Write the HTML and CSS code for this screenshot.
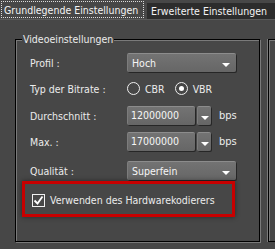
FILE: index.html
```html
<!DOCTYPE html>
<html lang="de">
<head>
    <meta charset="UTF-8">
    <title>Videoeinstellungen</title>
    <link rel="stylesheet" href="styles.css">
</head>
<body>
    <div class="tabs">
        <div class="tab active"><span>Grundlegende Einstellungen</span></div>
        <div class="tab">Erweiterte Einstellungen</div>
    </div>

    <div class="page">
        <div class="group">
            <span class="legend">Videoeinstellungen</span>

            <div class="row">
                <label>Profil :</label>
                <div class="combo"><span>Hoch</span><i class="arrow"></i></div>
            </div>

            <div class="row">
                <label>Typ der Bitrate :</label>
                <div class="radio"><i class="dot"></i>CBR</div>
                <div class="radio checked"><i class="dot"></i>VBR</div>
            </div>

            <div class="row row-avg">
                <label>Durchschnitt :</label>
                <div class="field">12000000</div>
                <div class="spin"><i class="arrow"></i></div>
                <span class="unit">bps</span>
            </div>

            <div class="row">
                <label>Max. :</label>
                <div class="field">17000000</div>
                <div class="spin"><i class="arrow"></i></div>
                <span class="unit">bps</span>
            </div>

            <div class="row row-quality">
                <label>Qualität :</label>
                <div class="combo"><span>Superfein</span><i class="arrow"></i></div>
            </div>

            <div class="hw">
                <i class="check"><svg width="11" height="11" viewBox="0 0 11 11"><path d="M1.5 5.5 L4.5 8.5 L9.5 1.5" fill="none" stroke="#fff" stroke-width="1.8"/></svg></i>
                <span>Verwenden des Hardwarekodierers</span>
            </div>
        </div>
        <div class="group group-next"></div>
    </div>
</body>
</html>
```

FILE: styles.css
```css
:root {
    --bg: #474747;
    --tabDark: #2c2c2c;
    --text: #ececec;
    --etch: #7a7a7a;
    --red: #c80000;
}

body {
    margin: 0;
    background: var(--bg);
    color: var(--text);
    font-family: 'DejaVu Sans Condensed', 'DejaVu Sans', sans-serif;
    font-size: 10.5px;
    width: 275px;
    height: 249px;
    overflow: hidden;
}

.tabs {
    display: flex;
    height: 20px;
    align-items: flex-end;
    border-bottom: 1px solid #5a5a5a;
    box-sizing: border-box;
}

.tab {
    height: 16px;
    line-height: 16px;
    padding: 0 4px;
    background: var(--tabDark);
    color: #f4f4f4;
    white-space: nowrap;
    margin-left: 3px;
    flex: 1;
    min-width: 0;
}

.tab.active {
    flex: none;
    width: 144px;
    height: 19px;
    margin-left: 0;
    padding: 1px 0 0 1px;
    background: var(--bg);
    box-sizing: border-box;
}

.tab.active span {
    display: block;
    height: 17px;
    line-height: 16px;
    padding-left: 2px;
    border: 1px dotted #dcdcdc;
    box-sizing: border-box;
}

.page {
    display: flex;
    padding-top: 19px;
}

.group {
    flex: none;
    margin-left: 15px;
    width: 245px;
    height: 203px;
    box-sizing: border-box;
    border: 1px solid #000;
    box-shadow: inset 1px 1px 0 var(--etch), 1px 1px 0 var(--etch);
    padding: 7px 0 0 14px;
    display: flex;
    flex-direction: column;
    gap: 7px;
}

.group-next {
    margin-left: 8px;
    width: 7px;
    padding: 0;
    border-right: none;
    box-shadow: -1px 0 0 var(--etch), inset 1px 1px 0 var(--etch);
}

.legend {
    align-self: flex-start;
    margin: -15px 0 0 -8px;
    padding: 0 1px;
    height: 14px;
    line-height: 14px;
    background: var(--bg);
}

.row {
    display: flex;
    align-items: center;
    height: 19px;
    white-space: nowrap;
}

.row > * {
    flex: none;
}

.row-avg {
    margin-top: 1px;
}

.row-quality {
    margin-top: 3px;
}

.row label {
    width: 97px;
}

.combo,
.field,
.spin {
    height: 19px;
    box-sizing: border-box;
    background: linear-gradient(#737373, #666);
    border-top: 1px solid #8c8c8c;
    border-left: 1px solid #7c7c7c;
    box-shadow: 1px 1px 0 #262626;
    border-radius: 2px;
    color: #f6f6f6;
}

.combo {
    width: 109px;
    display: flex;
    align-items: center;
    justify-content: space-between;
    padding: 0 6px 0 4px;
}

.field {
    width: 68px;
    line-height: 17px;
    padding-left: 3px;
}

.spin {
    width: 14px;
    margin-left: 2px;
    display: flex;
    align-items: center;
    justify-content: center;
}

.arrow {
    width: 0;
    height: 0;
    border-left: 4px solid transparent;
    border-right: 4px solid transparent;
    border-top: 4px solid #fff;
    margin-top: 3px;
}

.unit {
    margin-left: 8px;
    font-size: 11px;
}

.radio {
    display: flex;
    align-items: center;
    margin-right: 10px;
}

.radio .dot {
    width: 13px;
    height: 13px;
    box-sizing: border-box;
    border: 1.5px solid #f0f0f0;
    border-radius: 50%;
    margin-right: 5px;
    display: flex;
    align-items: center;
    justify-content: center;
}

.radio.checked .dot::after {
    content: "";
    width: 5px;
    height: 5px;
    border-radius: 50%;
    background: #fff;
}

.hw {
    margin: -6px 0 0 -8px;
    width: 213px;
    height: 36px;
    box-sizing: border-box;
    border: 3px solid var(--red);
    box-shadow: 0 0 5px rgba(0, 0, 0, 0.45);
    display: flex;
    align-items: center;
    padding-left: 7px;
    padding-top: 2px;
    white-space: nowrap;
}

.check {
    width: 13px;
    height: 13px;
    box-sizing: border-box;
    border: 1px solid #f0f0f0;
    margin-right: 5px;
    display: flex;
    align-items: center;
    justify-content: center;
}
```
